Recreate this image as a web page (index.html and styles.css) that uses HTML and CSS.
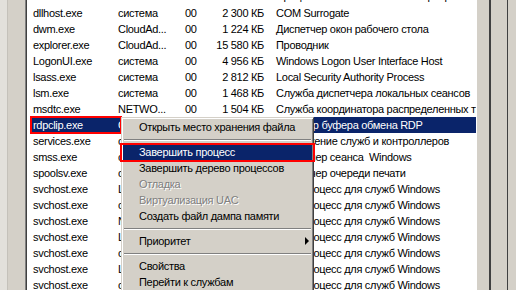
FILE: index.html
```html
<!DOCTYPE html>
<html lang="ru">
<head>
    <meta charset="UTF-8">
    <title>Диспетчер задач - Процессы</title>
    <link rel="stylesheet" href="styles.css">
</head>
<body>
    <div class="window">
        <div class="side-left"></div>

        <div class="list">
            <div class="rows">
                <div class="row"><span>csrss.exe</span><span>система</span><span>00</span><span class="mem">1 220 КБ</span><span class="desc">Процесс исполнения клиент-сервер</span></div>
                <div class="row"><span>dllhost.exe</span><span>система</span><span>00</span><span class="mem">2 300 КБ</span><span class="desc">COM Surrogate</span></div>
                <div class="row"><span>dwm.exe</span><span>CloudAd...</span><span>00</span><span class="mem">1 224 КБ</span><span class="desc">Диспетчер окон рабочего стола</span></div>
                <div class="row"><span>explorer.exe</span><span>CloudAd...</span><span>00</span><span class="mem">15 580 КБ</span><span class="desc">Проводник</span></div>
                <div class="row"><span>LogonUI.exe</span><span>система</span><span>00</span><span class="mem">4 956 КБ</span><span class="desc">Windows Logon User Interface Host</span></div>
                <div class="row"><span>lsass.exe</span><span>система</span><span>00</span><span class="mem">2 812 КБ</span><span class="desc">Local Security Authority Process</span></div>
                <div class="row"><span>lsm.exe</span><span>система</span><span>00</span><span class="mem">1 468 КБ</span><span class="desc">Служба диспетчера локальных сеансов</span></div>
                <div class="row"><span>msdtc.exe</span><span>NETWO...</span><span>00</span><span class="mem">1 504 КБ</span><span class="desc">Служба координатора распределенных транзакций</span></div>
                <div class="row selected"><span class="marked">rdpclip.exe</span><span>CloudAd...</span><span>00</span><span class="mem">1 836 КБ</span><span class="desc">Монитор буфера обмена RDP</span></div>
                <div class="row"><span>services.exe</span><span>система</span><span>00</span><span class="mem">3 412 КБ</span><span class="desc">Приложение служб и контроллеров</span></div>
                <div class="row"><span>smss.exe</span><span>система</span><span>00</span><span class="mem">288 КБ</span><span class="desc">Диспетчер сеанса&nbsp; Windows</span></div>
                <div class="row"><span>spoolsv.exe</span><span>система</span><span>00</span><span class="mem">4 016 КБ</span><span class="desc">Диспетчер очереди печати</span></div>
                <div class="row"><span>svchost.exe</span><span>LOCAL ...</span><span>00</span><span class="mem">3 204 КБ</span><span class="desc">Хост-процесс для служб Windows</span></div>
                <div class="row"><span>svchost.exe</span><span>система</span><span>00</span><span class="mem">5 120 КБ</span><span class="desc">Хост-процесс для служб Windows</span></div>
                <div class="row"><span>svchost.exe</span><span>NETWO...</span><span>00</span><span class="mem">2 944 КБ</span><span class="desc">Хост-процесс для служб Windows</span></div>
                <div class="row"><span>svchost.exe</span><span>LOCAL ...</span><span>00</span><span class="mem">6 780 КБ</span><span class="desc">Хост-процесс для служб Windows</span></div>
                <div class="row"><span>svchost.exe</span><span>система</span><span>00</span><span class="mem">14 352 КБ</span><span class="desc">Хост-процесс для служб Windows</span></div>
                <div class="row"><span>svchost.exe</span><span>LOCAL ...</span><span>00</span><span class="mem">2 080 КБ</span><span class="desc">Хост-процесс для служб Windows</span></div>
                <div class="row"><span>svchost.exe</span><span>система</span><span>00</span><span class="mem">1 692 КБ</span><span class="desc">Хост-процесс для служб Windows</span></div>
            </div>
        </div>

        <div class="side-right"></div>
    </div>

    <!-- контекстное меню поверх списка -->
    <div class="context-menu">
        <div class="menu-item">Открыть место хранения файла</div>
        <div class="menu-sep"></div>
        <div class="menu-item active">Завершить процесс</div>
        <div class="menu-item">Завершить дерево процессов</div>
        <div class="menu-item disabled">Отладка</div>
        <div class="menu-item disabled">Виртуализация UAC</div>
        <div class="menu-item">Создать файл дампа памяти</div>
        <div class="menu-sep"></div>
        <div class="menu-item submenu">Приоритет</div>
        <div class="menu-sep"></div>
        <div class="menu-item">Свойства</div>
        <div class="menu-item">Перейти к службам</div>
    </div>
</body>
</html>
```

FILE: styles.css
```css
body {
    margin: 0;
    width: 516px;
    height: 290px;
    overflow: hidden;
    font-family: 'Liberation Sans', Arial, sans-serif;
    font-size: 11px;
    letter-spacing: -0.3px;
    color: #000;
    background: #d4d0c8;
    position: relative;
}
.window {
    display: flex;
    height: 290px;
}
.side-left {
    width: 25px;
    flex: none;
    background: linear-gradient(to right, #e2e0db 0 7px, #c4c1ba 7px 8px, #d4d0c8 8px);
}
.list {
    flex: 1;
    background: #fff;
    border-left: 1px solid #808080;
    border-right: 1px solid #fff;
    box-shadow: inset 1px 0 #404040;
    overflow: hidden;
}
.rows {
    margin-top: -12px;
    padding-left: 4px;
}
.row {
    display: grid;
    grid-template-columns: 88px 67px 30px 49px 1fr;
    height: 16px;
    line-height: 16px;
    white-space: nowrap;
    position: relative;
}
.row:first-child {
    height: 17px;
}
.row span:first-child {
    padding-left: 3px;
}
.row .mem {
    text-align: right;
}
.row .desc {
    padding-left: 12px;
    overflow: hidden;
}
.row.selected {
    background: #0a246a;
    color: #fff;
}
.marked::after {
    content: '';
    position: absolute;
    left: 0;
    top: -1px;
    width: 88px;
    height: 14px;
    border: 2px solid #f00;
}
.side-right {
    width: 39px;
    flex: none;
    background: linear-gradient(to right, #d4d0c8 0 12px, #404040 12px 14px, #d4d0c8 14px 30px, #404040 30px 31px, #d4d0c8 31px);
}
.context-menu {
    position: absolute;
    left: 121px;
    top: 117px;
    width: 189px;
    padding: 1px;
    background: #d4d0c8;
    border: 1px solid;
    border-color: #d4d0c8 #404040 #404040 #d4d0c8;
    box-shadow: inset 1px 1px #fff, inset -1px -1px #808080;
}
.menu-item {
    height: 16px;
    line-height: 16px;
    padding-left: 16px;
    white-space: nowrap;
    position: relative;
}
.menu-item.active {
    background: #0a246a;
    color: #fff;
}
.menu-item.active::after {
    content: '';
    position: absolute;
    left: -3px;
    right: -3px;
    top: -1px;
    bottom: -2px;
    border: 2px solid #f00;
}
.menu-item.disabled {
    color: #808080;
    text-shadow: 1px 1px #fff;
}
.submenu::after {
    content: '';
    position: absolute;
    right: 3px;
    top: 4px;
    border-left: 4px solid #000;
    border-top: 4px solid transparent;
    border-bottom: 4px solid transparent;
}
.menu-sep {
    height: 9px;
    margin: 0 1px;
    background: linear-gradient(#d4d0c8 0 4px, #808080 4px 5px, #fff 5px 6px, #d4d0c8 6px);
}
```
